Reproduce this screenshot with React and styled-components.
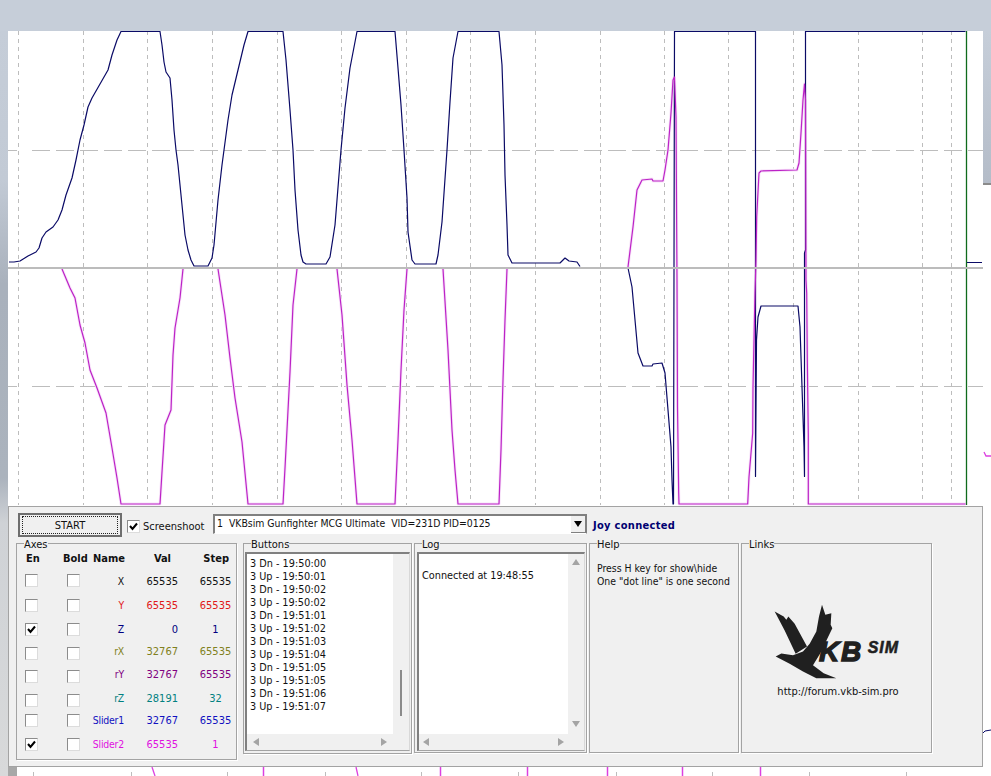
import React from "react";
import styled, { createGlobalStyle } from "styled-components";

const GlobalStyle = createGlobalStyle`
  html, body {
    margin: 0;
    padding: 0;
    background: #ffffff;
  }
  body {
    font-family: "DejaVu Sans Condensed", "DejaVu Sans", "Liberation Sans", sans-serif;
    font-stretch: condensed;
    font-size: 11px;
    color: #111;
  }
`;

const NAVY = "#0a0a66";
const MAGENTA = "#bc22c6";

// all traces are in page pixels, the chart viewBox starts at the chart corner
const navyTrace = [
  [9, 262], [14, 262], [20, 261], [28, 256], [36, 252], [39, 248], [42, 238], [46, 232], [53, 227], [58, 220],
  [62, 210], [66, 195], [72, 178], [76, 160], [80, 140], [84, 125], [88, 107], [92, 98], [100, 84], [108, 70],
  [112, 55], [117, 40], [121, 31.5], [160, 31.5], [162, 45], [164, 62], [166, 72], [170, 78], [172, 100], [174, 130],
  [176, 150], [178, 165], [181, 195], [183, 215], [185, 235], [188, 250], [191, 260], [194, 266], [208, 266],
  [212, 258], [214, 245], [218, 200], [222, 165], [228, 120], [232, 95], [238, 70], [244, 45], [248, 31.5], [283, 31.5],
  [286, 60], [290, 110], [293, 150], [295, 190], [298, 230], [301, 255], [303, 262], [306, 264], [326, 264],
  [330, 257], [335, 225], [341, 150], [345, 108], [350, 68], [357, 31.5], [395, 31.5], [398, 68], [401, 105], [404, 150],
  [407, 198], [408, 232], [412, 260], [415, 264], [436, 264], [438, 255], [442, 222], [447, 150], [450, 102],
  [453, 58], [458, 31.5], [499, 31.5], [502, 65], [504, 125], [505, 175], [507, 225], [508, 255], [512, 263], [560, 263],
  [565, 258], [569, 261], [577, 262], [580, 266.5],
];

const navyTrace2 = [
  [628, 268], [632, 287], [635, 320], [638, 353], [643, 366], [652, 366], [653, 364], [662, 363], [665, 373],
  [668, 410], [671, 447], [672, 480], [673, 504], [673.5, 504], [674.5, 31.5], [755.5, 31.5], [755.5, 476.5], [756.5, 340],
  [758, 317], [761, 306], [798, 306], [800, 327], [802, 387], [804, 447], [804.5, 476.5], [804.5, 253], [805.5, 250],
  [805.5, 31.5], [965.5, 31.5],
];

const magentaTraces = [
  [[62, 269], [70, 288], [75, 298], [80, 325], [85, 343], [90, 370], [97, 388], [106, 413], [112, 448], [117, 478],
    [121, 504], [160, 504], [162, 472], [165, 425], [171, 410], [173, 355], [175, 328], [180, 298], [183, 269]],
  [[218, 269], [225, 315], [230, 358], [235, 398], [242, 442], [248, 504], [283, 504], [285, 468], [290, 372],
    [293, 305], [297, 269]],
  [[337, 269], [342, 315], [347, 385], [352, 440], [357, 504], [395, 504], [398, 440], [401, 370], [404, 310], [407, 269]],
  [[443, 269], [448, 350], [452, 430], [455, 470], [458, 504], [499, 504], [501, 450], [503, 380], [505, 320], [507, 269]],
  [[628, 267], [633, 227], [637, 190], [642, 180], [652, 179], [653, 181], [663, 181], [665, 170], [668, 150], [671, 113],
    [673, 80], [674.5, 77], [676, 117], [677, 280], [677.5, 407], [678.7, 493], [679, 504], [747.7, 504], [749, 477],
    [752.7, 433], [753, 387], [755, 293], [756, 260], [756.7, 217], [759, 173], [761, 171], [797, 170], [799, 163],
    [801, 133], [803, 100], [804.5, 84], [805.5, 100], [806, 280], [806.7, 293], [807.3, 360], [808.3, 435], [808.3, 504],
    [965.5, 504]],
];

const dotLines = [18, 83, 147, 212, 277, 341, 406, 470, 535, 600, 664, 728, 793, 858, 922, 951];
const bottomTicks = [33, 131, 227, 325, 421, 518, 616, 712, 809, 906];
const bottomMagenta = [263, 440, 527, 607, 682, 760];

const toPoints = (pts) => pts.map((p) => p.join(",")).join(" ");

const Chart = () => (
  <ChartSvg viewBox="8 31 983 745" width="983" height="745">
    {dotLines.map((x) => (
      <line key={x} x1={x + 0.5} x2={x + 0.5} y1="31" y2="505" stroke="#bdbdbd" strokeDasharray="4 4" />
    ))}
    <line x1="8" x2="17" y1="150.5" y2="150.5" stroke="#bdbdbd" />
    <line x1="32" x2="983" y1="150.5" y2="150.5" stroke="#bdbdbd" strokeDasharray="18 6" />
    <line x1="8" x2="17" y1="386.5" y2="386.5" stroke="#bdbdbd" />
    <line x1="32" x2="983" y1="386.5" y2="386.5" stroke="#bdbdbd" strokeDasharray="18 6" />

    {magentaTraces.map((pts, i) => (
      <polyline key={i} points={toPoints(pts)} fill="none" stroke="#f8e4fa" strokeWidth="3" strokeLinejoin="round" />
    ))}
    <line x1="966.5" x2="966.5" y1="31" y2="505" stroke="#0f6b1c" strokeWidth="1.3" />
    <polyline points={toPoints(navyTrace)} fill="none" stroke={NAVY} strokeWidth="1.2" strokeLinejoin="round" />
    <polyline points={toPoints(navyTrace2)} fill="none" stroke={NAVY} strokeWidth="1.2" strokeLinejoin="round" />
    {magentaTraces.map((pts, i) => (
      <polyline key={i} points={toPoints(pts)} fill="none" stroke={MAGENTA} strokeWidth="1.2" strokeLinejoin="round" />
    ))}
    <line x1="967" x2="982" y1="262.5" y2="262.5" stroke={NAVY} />
    <line x1="8" x2="983" y1="268" y2="268" stroke="#bcbcbc" strokeWidth="2" />

    {/* the part of the window that sticks out under the panel */}
    <rect x="8" y="767" width="9" height="9" fill="#a8a8a8" />
    {bottomTicks.map((x) => (
      <line key={x} x1={x + 0.5} x2={x + 0.5} y1="772" y2="776" stroke="#bdbdbd" />
    ))}
    {bottomMagenta.map((x) => (
      <line key={x} x1={x + 0.5} x2={x + 0.5} y1="767" y2="776" stroke="#dc40e0" strokeWidth="1.5" />
    ))}
    <line x1="152" x2="155" y1="767" y2="776" stroke="#dc40e0" strokeWidth="1.3" />
    <line x1="356" x2="358" y1="767" y2="776" stroke="#dc40e0" strokeWidth="1.3" />
    <polyline points="984,452 986,456 991,456" fill="none" stroke="#dc40e0" strokeWidth="1.3" />
    <polyline points="983,733 985,731 991,730" fill="none" stroke={NAVY} />
  </ChartSvg>
);

const axes = [
  { name: "X", val: 65535, step: 65535, color: "#111111", en: false, gap: 6, shift: 1 },
  { name: "Y", val: 65535, step: 65535, color: "#e01818", en: false, gap: 9, shift: 0 },
  { name: "Z", val: 0, step: 1, color: "#000080", en: true, gap: 8, shift: 0 },
  { name: "rX", val: 32767, step: 65535, color: "#808020", en: false, gap: 8, shift: -2 },
  { name: "rY", val: 32767, step: 65535, color: "#800080", en: false, gap: 7, shift: -2 },
  { name: "rZ", val: 28191, step: 32, color: "#008080", en: false, gap: 8, shift: -2 },
  { name: "Slider1", val: 32767, step: 65535, color: "#1010c0", en: false, gap: 4, shift: 0 },
  { name: "Slider2", val: 65535, step: 1, color: "#e010e0", en: true, gap: 8, shift: 0 },
];

const buttonLog = [
  "3 Dn - 19:50:00", "3 Up - 19:50:01", "3 Dn - 19:50:02", "3 Up - 19:50:02",
  "3 Dn - 19:51:01", "3 Up - 19:51:02", "3 Dn - 19:51:03", "3 Up - 19:51:04",
  "3 Dn - 19:51:05", "3 Up - 19:51:05", "3 Dn - 19:51:06", "3 Up - 19:51:07",
];

const CheckBox = ({ checked }) => (
  <Box>
    {checked && (
      <svg width="9" height="9" viewBox="0 0 9 9">
        <path d="M1 4 L3.5 7 L8 1.5" fill="none" stroke="#000" strokeWidth="2" />
      </svg>
    )}
  </Box>
);

const Logo = () => (
  <svg width="130" height="77" viewBox="340 310 390 230">
    <path d="M345 335 L372 350 L380 360 L386 350 L405 372 L442 440 L408 462 L375 392 Z" fill="#202020" />
    <path
      d="M348 470 L365 461 L400 466 L430 455 L450 432 L470 395 L478 350 L487 315 L497 345 L515 340 L513 375 L518 385 L510 402 L482 460 L460 496 L492 520 L530 535 L470 535 L430 515 L390 492 Z"
      fill="#202020"
    />
    <LogoText x="478" y="485" fontSize="84" letterSpacing="5" stroke="#202020" strokeWidth="4">
      KB
    </LogoText>
    <LogoText x="624" y="460" fontSize="48" letterSpacing="3" stroke="#202020" strokeWidth="1.5">
      SIM
    </LogoText>
  </svg>
);

export default function App() {
  return (
    <Page>
      <GlobalStyle />
      <TopBar />
      <Desktop>
        <LeftEdge />
        <ChartArea>
          <Chart />
          <Panel>
            <TopRow>
              <StartButton>START</StartButton>
              <ShotLabel>
                <CheckBox checked />
                Screenshoot
              </ShotLabel>
              <Combo>
                <ComboText>1  VKBsim Gunfighter MCG Ultimate  VID=231D PID=0125</ComboText>
                <ComboButton>
                  <Arrow $dir="down" $color="#000" />
                </ComboButton>
              </Combo>
              <Status>Joy connected</Status>
            </TopRow>

            <Groups>
              <Group $w={221} $h={217}>
                <GroupTitle>Axes</GroupTitle>
                <AxesHead>
                  <span>En</span>
                  <span>Bold</span>
                  <span>Name</span>
                  <HeadRight>Val</HeadRight>
                  <HeadRight>Step</HeadRight>
                </AxesHead>
                {axes.map((a) => (
                  <AxisRow key={a.name} $gap={a.gap} $color={a.color}>
                    <CheckBox checked={a.en} />
                    <CheckBox />
                    <AxisName $shift={a.shift}>{a.name}</AxisName>
                    <AxisVal $shift={a.shift}>{a.val}</AxisVal>
                    <AxisStep $shift={a.shift}>{a.step}</AxisStep>
                  </AxisRow>
                ))}
              </Group>

              <Group $w={169} $h={211} $left={6}>
                <GroupTitle>Buttons</GroupTitle>
                <ListFrame $w={165}>
                  <ListBody $top={3}>
                    {buttonLog.map((line, i) => (
                      <div key={i}>{line}</div>
                    ))}
                  </ListBody>
                  <VScroll $pad={116}>
                    <Thumb />
                  </VScroll>
                  <HScroll>
                    <Arrow $dir="left" />
                    <Arrow $dir="right" />
                  </HScroll>
                </ListFrame>
              </Group>

              <Group $w={173} $h={210} $left={2}>
                <GroupTitle>Log</GroupTitle>
                <ListFrame $w={168} $offset={2}>
                  <ListBody $top={15}>Connected at 19:48:55</ListBody>
                  <VScroll $pad={5} $between>
                    <Arrow $dir="up" />
                    <Arrow $dir="down" />
                  </VScroll>
                  <HScroll $inset={4}>
                    <Arrow $dir="left" />
                    <Arrow $dir="right" />
                  </HScroll>
                </ListFrame>
              </Group>

              <Group $w={150} $h={210} $left={2}>
                <GroupTitle>Help</GroupTitle>
                <HelpText>
                  Press H key for show\hide
                  <br />
                  One "dot line" is one second
                </HelpText>
              </Group>

              <Group $w={191} $h={210} $left={2}>
                <GroupTitle>Links</GroupTitle>
                <LinksBody>
                  <Logo />
                  <LinkText>http://forum.vkb-sim.pro</LinkText>
                </LinksBody>
              </Group>
            </Groups>
          </Panel>
        </ChartArea>
        <RightEdge>
          <RightTop />
        </RightEdge>
      </Desktop>
    </Page>
  );
}

const Page = styled.div`
  width: 991px;
  height: 776px;
  overflow: hidden;
  display: flex;
  flex-direction: column;
`;

const TopBar = styled.div`
  height: 31px;
  flex: none;
  background: #c6ced9;
`;

const Desktop = styled.div`
  flex: 1;
  display: flex;
`;

const LeftEdge = styled.div`
  width: 8px;
  flex: none;
  background: linear-gradient(
    180deg,
    #c5cdd8 0,
    #c2cad5 20%,
    #a9b1bc 34%,
    #abb3bd 60%,
    #cfd2d6 66%,
    #d8d9da 100%
  );
`;

const ChartArea = styled.div`
  position: relative;
  width: 975px;
  flex: none;
  background: #ffffff;
`;

const ChartSvg = styled.svg`
  position: absolute;
  left: 0;
  top: 0;
  display: block;
  z-index: 1;
`;

const RightEdge = styled.div`
  flex: 1;
  background: #ffffff;
`;

const RightTop = styled.div`
  height: 152px;
  background: linear-gradient(180deg, #c6ced9 0, #b4bcc8 100%);
  border-bottom: 2px solid #8b8b8b;
`;

const LogoText = styled.text`
  font-family: "Liberation Sans", sans-serif;
  font-weight: 700;
  font-style: italic;
  font-stretch: normal;
  fill: #202020;
`;

const Panel = styled.div`
  position: absolute;
  z-index: 2;
  left: 0;
  top: 475px;
  width: 975px;
  height: 261px;
  box-sizing: border-box;
  padding: 6px 0 0 7px;
  background: #f0f0f0;
  border: 1px solid #a3a3a3;
`;

const TopRow = styled.div`
  display: flex;
  align-items: flex-start;
  height: 24px;
  padding-left: 2px;
`;

const StartButton = styled.button`
  position: relative;
  width: 104px;
  height: 24px;
  flex: none;
  padding: 0;
  margin: 0;
  font: inherit;
  color: #111;
  background: #f0f0f0;
  border: 2px solid #6e6e6e;
  border-radius: 0;
  &::after {
    content: "";
    position: absolute;
    inset: 1px 2px;
    border: 1px dotted #222;
  }
`;

const ShotLabel = styled.label`
  width: 91px;
  flex: none;
  box-sizing: border-box;
  display: flex;
  align-items: center;
  gap: 3px;
  margin-top: 7px;
  padding-left: 5px;
  line-height: 13px;
`;

const Box = styled.span`
  width: 13px;
  height: 13px;
  flex: none;
  box-sizing: border-box;
  display: flex;
  align-items: center;
  justify-content: center;
  background: #ffffff;
  border: 1px solid #8c8c8c;
  border-right-color: #dcdcdc;
  border-bottom-color: #dcdcdc;
`;

const Combo = styled.div`
  width: 374px;
  height: 20px;
  flex: none;
  box-sizing: border-box;
  margin-top: 1px;
  display: flex;
  align-items: stretch;
  justify-content: space-between;
  background: #ffffff;
  border: 2px solid #808080;
  border-right-width: 1px;
  border-bottom: 1px solid #ffffff;
`;

const ComboText = styled.div`
  white-space: pre;
  font-size: 10.4px;
  line-height: 15px;
  padding-left: 2px;
`;

const ComboButton = styled.div`
  width: 15px;
  box-sizing: border-box;
  display: flex;
  align-items: center;
  justify-content: center;
  background: #f0f0f0;
  border-right: 1px solid #808080;
  border-bottom: 1px solid #808080;
`;

const Status = styled.div`
  margin: 6px 0 0 6px;
  font-weight: 700;
  color: #000070;
  line-height: 13px;
  letter-spacing: 0.3px;
`;

const Groups = styled.div`
  display: flex;
  align-items: flex-start;
  margin-top: 6px;
`;

const Group = styled.div`
  position: relative;
  flex: none;
  box-sizing: border-box;
  width: ${(p) => p.$w}px;
  height: ${(p) => p.$h}px;
  margin-left: ${(p) => p.$left || 0}px;
  border: 1px solid #a3a3a3;
  box-shadow: 1px 1px 0 #ffffff;
`;

const GroupTitle = styled.span`
  position: absolute;
  left: 7px;
  top: -6px;
  line-height: 13px;
  background: #f0f0f0;
`;

const AxesHead = styled.div`
  display: grid;
  grid-template-columns: 37px 30px 31px 47px 58px;
  margin-top: 8px;
  padding-left: 9px;
  font-weight: 700;
  line-height: 14px;
`;

const HeadRight = styled.span`
  text-align: right;
`;

const AxisRow = styled.div`
  display: grid;
  grid-template-columns: 42px 26px 31px 54px 58px;
  align-items: center;
  height: 16px;
  margin-top: ${(p) => p.$gap}px;
  padding-left: 8px;
  color: ${(p) => p.$color};
`;

const AxisCell = styled.span`
  line-height: 13px;
  margin-top: ${(p) => p.$shift * 2}px;
`;

const AxisName = styled(AxisCell)`
  justify-self: end;
  white-space: nowrap;
  font-size: 10.4px;
  letter-spacing: -0.2px;
`;

const AxisVal = styled(AxisCell)`
  text-align: right;
`;

const AxisStep = styled(AxisCell)`
  text-align: center;
  padding-left: 17px;
`;

const ListFrame = styled.div`
  box-sizing: border-box;
  width: ${(p) => p.$w}px;
  height: 199px;
  margin: 8px 0 0 ${(p) => p.$offset || 1}px;
  display: grid;
  grid-template-columns: 1fr 16px;
  grid-template-rows: 180px 1fr;
  background: #f0f0f0;
  border: 2px solid #808080;
  border-right: 1px solid #d8d8d8;
  border-bottom: 1px solid #a3a3a3;
`;

const ListBody = styled.div`
  background: #ffffff;
  padding: ${(p) => p.$top || 1}px 0 0 3px;
  line-height: 13px;
  font-size: 10.8px;
`;

const VScroll = styled.div`
  display: flex;
  flex-direction: column;
  align-items: center;
  justify-content: ${(p) => (p.$between ? "space-between" : "flex-start")};
  padding: ${(p) => p.$pad}px 0 7px;
`;

const Thumb = styled.div`
  width: 2px;
  height: 46px;
  background: #8a8a8a;
`;

const HScroll = styled.div`
  grid-column: 1 / span 1;
  display: flex;
  align-items: center;
  justify-content: space-between;
  padding: 0 ${(p) => p.$inset || 6}px;
`;

const arrowBorders = {
  down: "border-width: 6px 4px 0; border-top-color: COLOR;",
  up: "border-width: 0 4px 6px; border-bottom-color: COLOR;",
  left: "border-width: 4px 6px 4px 0; border-right-color: COLOR;",
  right: "border-width: 4px 0 4px 6px; border-left-color: COLOR;",
};

const Arrow = styled.i`
  display: block;
  width: 0;
  height: 0;
  border-style: solid;
  border-color: transparent;
  ${(p) => arrowBorders[p.$dir].replace("COLOR", p.$color || "#a4a4a4")}
`;

const HelpText = styled.div`
  padding: 18px 0 0 7px;
  font-size: 10.4px;
  line-height: 13px;
`;

const LinksBody = styled.div`
  display: flex;
  flex-direction: column;
  align-items: center;
  padding: 59px 0 0 3px;
`;

const LinkText = styled.div`
  margin-top: 5px;
  line-height: 13px;
`;
